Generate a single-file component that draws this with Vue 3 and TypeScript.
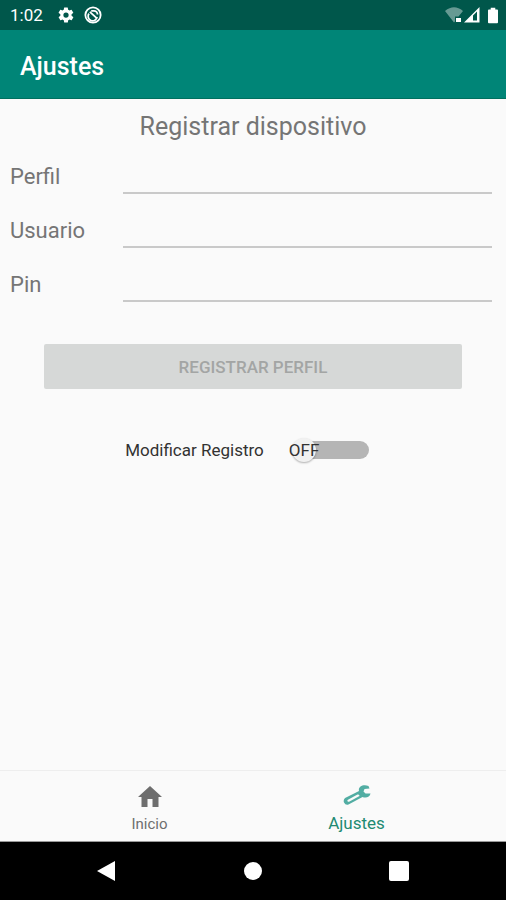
<script setup lang="ts">
import { computed, reactive, ref } from 'vue'

type FieldKey = 'perfil' | 'usuario' | 'pin'

interface Field {
  key: FieldKey
  label: string
  type: string
}

const fields: Field[] = [
  { key: 'perfil', label: 'Perfil', type: 'text' },
  { key: 'usuario', label: 'Usuario', type: 'text' },
  { key: 'pin', label: 'Pin', type: 'password' },
]

const form = reactive<Record<FieldKey, string>>({ perfil: '', usuario: '', pin: '' })
const editable = ref(false)
const switchText = computed(() => (editable.value ? 'ON' : 'OFF'))
</script>

<template>
  <div class="screen">
    <div class="status-bar">
      <span class="clock">1:02</span>
      <svg class="gear" viewBox="0 0 24 24" aria-hidden="true">
        <path
          d="M19.4 13a7.500 7.500 0 0 0 0-2l2.100-1.600a.5.5 0 0 0 .1-.7l-2-3.400a.5.5 0 0 0-.6-.2l-2.500 1a7.300 7.300 0 0 0-1.700-1l-.4-2.700a.5.5 0 0 0-.5-.4h-4a.5.5 0 0 0-.5.4L9 5.100a7.700 7.700 0 0 0-1.700 1l-2.500-1a.5.5 0 0 0-.6.2l-2 3.400c-.1.300 0 .5.1.7L4.500 11a8 8 0 0 0 0 2l-2.100 1.600a.5.5 0 0 0-.1.700l2 3.400c.1.200.4.300.6.200l2.500-1c.5.400 1.100.7 1.700 1l.4 2.700c0 .2.200.4.500.4h4c.2 0 .5-.2.500-.4l.4-2.700c.6-.3 1.200-.6 1.700-1l2.500 1c.2.100.5 0 .6-.2l2-3.400a.5.5 0 0 0-.1-.7zM12 15.500a3.500 3.500 0 1 1 0-7 3.500 3.500 0 0 1 0 7z"
        />
      </svg>
      <svg class="sync" viewBox="0 0 20 20" aria-hidden="true">
        <circle cx="10" cy="10" r="8.500" />
        <path d="M5.500 8.500a5 5 0 1 0 9 3.500M6.500 6.500l7 6.500M8 5.500h3a4 4 0 0 1 4 4" />
      </svg>
      <span class="signals">
        <svg class="wifi" viewBox="0 0 18 16" aria-hidden="true">
          <path class="faded" d="M0 4Q9-3.500 18 4L13.500 9.500H10V14.500L9 15.500z" />
          <rect x="11" y="11" width="5" height="4" />
        </svg>
        <svg class="cell" viewBox="0 0 16 16" aria-hidden="true">
          <path fill-rule="evenodd" d="M15.500 0V15.500H0zM9 8.500V13.500H13V4.500z" />
        </svg>
        <svg class="battery" viewBox="0 0 11 17" aria-hidden="true">
          <path d="M3 0h5v2h2q1 0 1 1v13q0 1-1 1H1q-1 0-1-1V3q0-1 1-1h2z" />
        </svg>
      </span>
    </div>

    <header class="app-bar">
      <h1>Ajustes</h1>
    </header>

    <main class="content">
      <h2>Registrar dispositivo</h2>
      <form @submit.prevent>
        <div v-for="field in fields" :key="field.key" class="row">
          <label :for="field.key">{{ field.label }}</label>
          <input :id="field.key" v-model="form[field.key]" :type="field.type" autocomplete="off" />
        </div>
        <button class="submit" type="submit" :disabled="!editable">REGISTRAR PERFIL</button>
      </form>
      <label class="toggle">
        <span>Modificar Registro</span>
        <span class="switch">
          <input v-model="editable" type="checkbox" role="switch" />
          <span class="thumb"></span>
          <span class="state">{{ switchText }}</span>
        </span>
      </label>
    </main>

    <nav class="tabs">
      <a class="tab" href="#inicio">
        <svg class="home" viewBox="0 0 24 21" aria-hidden="true">
          <path d="M12 0L24 11H20.500V21H14.500V13H9.500V21H3.500V11H0z" />
        </svg>
        <span>Inicio</span>
      </a>
      <a class="tab active" href="#ajustes" aria-current="page">
        <svg class="wrench" viewBox="0 0 28 21" aria-hidden="true">
          <path
            fill-rule="evenodd"
            d="M25.500 1C19.500-1 15 2 16 6L2 13Q0 15 1 17.500Q2.500 20.500 5.500 19.500L19.500 12C23 13.500 27 12 27.500 8.500L22.500 8.500L20.500 6.500L21.500 4L26.500 3.500zM4.500 15L14.500 9.500Q16.500 9 16.500 11L6.500 16.500Q4 17.500 4.500 15z"
          />
        </svg>
        <span>Ajustes</span>
      </a>
    </nav>

    <div class="system-nav">
      <button type="button" aria-label="Atrás">
        <svg viewBox="0 0 20 22" aria-hidden="true"><path d="M0 11L18 1V21z" /></svg>
      </button>
      <button type="button" aria-label="Pantalla principal">
        <svg viewBox="0 0 20 22" aria-hidden="true"><circle cx="10" cy="11" r="9" /></svg>
      </button>
      <button type="button" aria-label="Recientes">
        <svg viewBox="0 0 20 22" aria-hidden="true"><rect y="1" width="20" height="20" rx="2" /></svg>
      </button>
    </div>
  </div>
</template>

<style>
body {
  background: #fafafa;
}
</style>

<style scoped>
.screen {
  display: flex;
  flex-direction: column;
  min-height: 100vh;
  background: #fafafa;
  color: #757575;
  font-family: Roboto, "Liberation Sans", sans-serif;
}

svg {
  display: block;
  fill: currentColor;
}

.status-bar {
  display: flex;
  align-items: center;
  height: 30px;
  padding: 0 8px 0 10px;
  background: #00574b;
  color: #fff;
}

.clock {
  font-size: 17px;
  line-height: 20px;
}

.gear {
  width: 18px;
  height: 18px;
  margin-left: 14px;
}

.sync {
  width: 18px;
  height: 18px;
  margin-left: 9px;
  fill: none;
  stroke: currentColor;
  stroke-width: 2;
}

.signals {
  display: flex;
  align-items: center;
  margin-left: auto;
}

.wifi {
  width: 18px;
  height: 16px;
}

.faded {
  opacity: 0.4;
}

.cell {
  width: 16px;
  height: 16px;
  margin-left: 1px;
}

.battery {
  width: 10px;
  height: 17px;
  margin-left: 8px;
}

.app-bar {
  display: flex;
  align-items: center;
  height: 69px;
  padding: 6px 20px 0;
  box-sizing: border-box;
  border-bottom: 1px solid #00705f;
  background: #008577;
  color: #fff;
}

h1 {
  margin: 0;
  font-size: 25px;
  font-weight: 500;
  line-height: 32px;
}

.content {
  flex: 1;
  padding: 12px 10px 24px;
}

h2 {
  margin: 0 0 18px;
  font-size: 25px;
  font-weight: 400;
  line-height: 32px;
  text-align: center;
}

.row {
  display: grid;
  grid-template-columns: 109px 1fr;
  align-items: start;
  column-gap: 4px;
  height: 34px;
  margin: 0 4px 20px 0;
}

.row label {
  font-size: 22px;
  line-height: 32px;
}

.row input {
  width: 100%;
  height: 33px;
  box-sizing: border-box;
  padding: 0 4px;
  border: 0;
  border-bottom: 2px solid #c9c9c9;
  outline: none;
  background: transparent;
  color: #212121;
  font: 400 22px/30px Roboto, sans-serif;
}

.submit {
  display: block;
  width: calc(100% - 68px);
  height: 45px;
  margin: 41px auto 0;
  border: 0;
  border-radius: 2px;
  background: #d6d8d7;
  color: #a3a5a4;
  font: 500 17px/24px Roboto, sans-serif;
}

.submit:enabled {
  color: #212121;
}

.toggle {
  display: flex;
  align-items: center;
  justify-content: center;
  gap: 25px;
  margin-top: 46px;
  padding-right: 12px;
  color: #323232;
  font-size: 17px;
  line-height: 30px;
}

.switch {
  position: relative;
  display: flex;
  align-items: center;
  width: 80px;
  height: 30px;
}

.switch input {
  width: 72px;
  height: 18px;
  margin: 0 0 0 8px;
  border-radius: 9px;
  background: #b5b5b5;
  appearance: none;
}

.thumb {
  position: absolute;
  top: 3px;
  left: 3px;
  width: 24px;
  height: 24px;
  border-radius: 50%;
  background: #f1f1f1;
  box-shadow: 0 1px 2px rgba(0, 0, 0, 0.3);
  pointer-events: none;
}

.state {
  position: absolute;
  top: 0;
  left: 0;
  font-size: 17px;
  pointer-events: none;
}

.switch input:checked + .thumb,
.switch input:checked ~ .state {
  right: 2px;
  left: auto;
}

.tabs {
  display: flex;
  justify-content: center;
  height: 72px;
  padding: 0 46px;
  box-sizing: border-box;
  border-top: 1px solid #eee;
  border-bottom: 1px solid #999;
}

.tab {
  display: flex;
  flex: 1;
  flex-direction: column;
  align-items: center;
  justify-content: flex-end;
  gap: 8px;
  padding-bottom: 8px;
  color: #6e6e6e;
  font-size: 15px;
  line-height: 18px;
  text-decoration: none;
}

.active {
  padding-bottom: 9px;
  color: #218a72;
  font-size: 17px;
}

.home {
  width: 24px;
  height: 21px;
}

.wrench {
  width: 28px;
  height: 21px;
  color: #52ada3;
}

.system-nav {
  display: flex;
  justify-content: center;
  gap: 98px;
  height: 58px;
  background: #000;
}

.system-nav button {
  display: flex;
  align-items: center;
  justify-content: center;
  width: 48px;
  padding: 0;
  border: 0;
  background: transparent;
  color: #fff;
}

.system-nav svg {
  width: 20px;
  height: 22px;
}
</style>
